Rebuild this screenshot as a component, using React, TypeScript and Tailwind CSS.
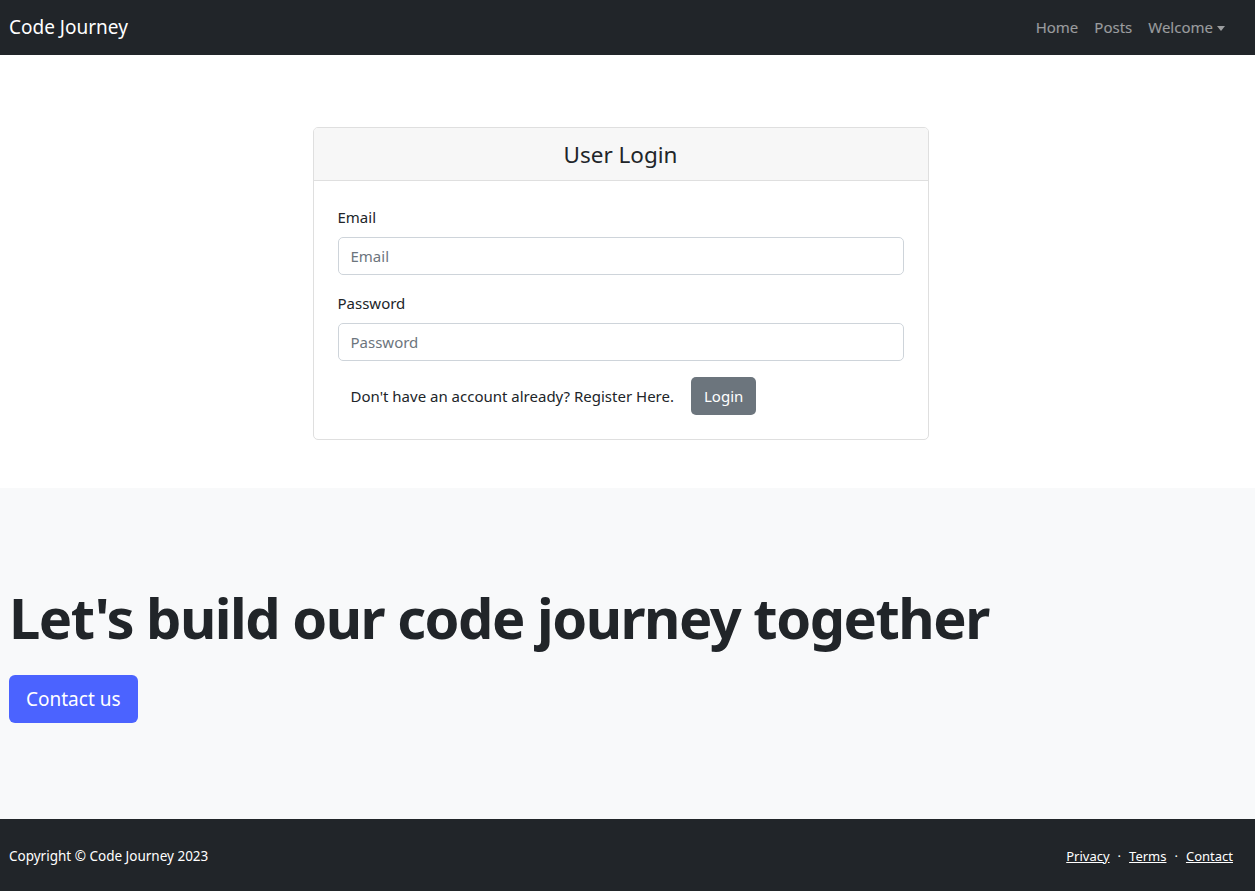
const font = { fontFamily: '"Noto Sans", "Open Sans", sans-serif' }

export default function App() {
  return (
    <div style={font} className="min-h-[891px] flex flex-col text-[#212529]">
      {/* Navbar */}
      <nav className="h-[55px] bg-[#212529] flex items-center justify-between pl-[9px] pr-[30px]">
        <span className="text-[19px] text-white">Code Journey</span>
        <div className="flex items-center gap-4 text-[15px] text-white/55">
          <span>Home</span>
          <span>Posts</span>
          <span className="flex items-center gap-1">
            Welcome
            <span className="inline-block w-0 h-0 border-l-[4px] border-r-[4px] border-t-[5px] border-l-transparent border-r-transparent border-t-white/55 mt-[1px]" />
          </span>
        </div>
      </nav>

      {/* Login */}
      <section className="bg-white pt-[72px] pb-[48px] pr-[14px] flex justify-center">
        <div className="w-[616px] border border-[#dfdfdf] rounded-[5px] overflow-hidden">
          <div className="h-[53px] bg-[#f7f7f7] border-b border-[#dfdfdf] flex items-center justify-center pt-[2px]">
            <h3 className="text-[22.5px]">User Login</h3>
          </div>
          <form className="px-6 pt-6 pb-6 flex flex-col">
            <label className="text-[15px] leading-[24px] mb-2">Email</label>
            <input
              placeholder="Email"
              className="h-[38px] border border-[#ced4da] rounded-[5px] px-3 text-[15px] placeholder:text-[#6c757d] outline-none"
            />
            <label className="text-[15px] leading-[24px] mt-4 mb-2">Password</label>
            <input
              type="password"
              placeholder="Password"
              className="h-[38px] border border-[#ced4da] rounded-[5px] px-3 text-[15px] placeholder:text-[#6c757d] outline-none"
            />
            <div className="flex items-center mt-4 pl-[13px] gap-[17px]">
              <span className="text-[15px]">Don't have an account already? Register Here.</span>
              <button type="button" className="h-[38px] px-[13px] bg-[#6c757d] text-white text-[15px] rounded-[5px]">
                Login
              </button>
            </div>
          </form>
        </div>
      </section>

      {/* Hero */}
      <section className="h-[331px] bg-[#f8f9fa] flex flex-col pl-[9px] pt-[96px]">
        <h1 className="text-[56px] font-bold leading-[1.2] text-[#212529] tracking-[-1.5px]">
          Let's build our code journey together
        </h1>
        <div className="mt-[24px]">
          <button type="button" className="h-[48px] px-[17px] bg-[#4b63ff] text-white text-[19px] rounded-[6px]">
            Contact us
          </button>
        </div>
      </section>

      {/* Footer */}
      <footer className="h-[72px] bg-[#212529] flex items-center justify-between pl-[9px] pr-[22px] pt-[3px] text-[13.5px] text-white">
        <span>Copyright © Code Journey 2023</span>
        <div className="flex items-center gap-[8px] text-[13px]">
          <a className="underline">Privacy</a>
          <span>·</span>
          <a className="underline">Terms</a>
          <span>·</span>
          <a className="underline">Contact</a>
        </div>
      </footer>
    </div>
  )
}
